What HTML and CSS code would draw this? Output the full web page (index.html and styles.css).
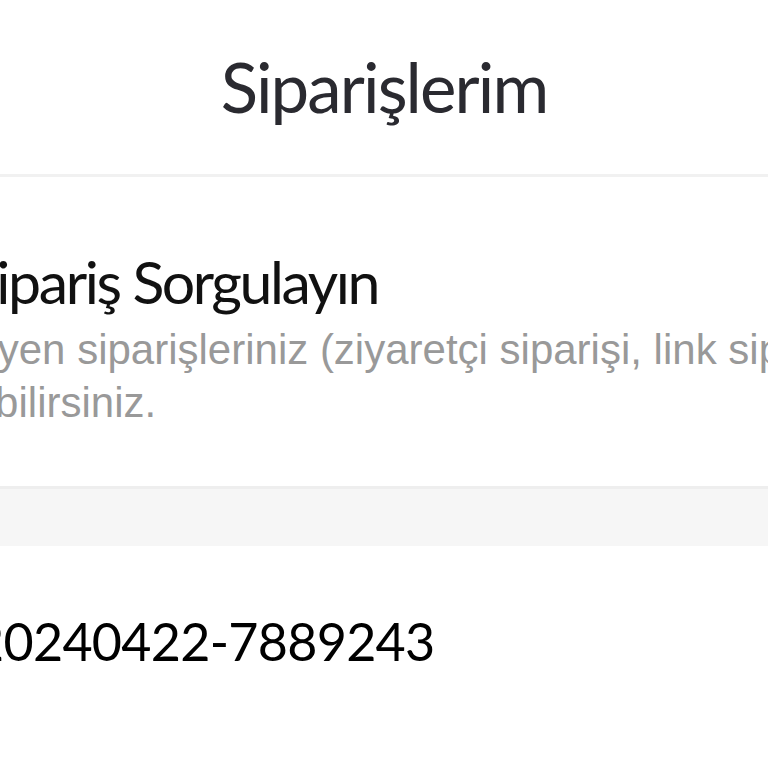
FILE: index.html
```html
<!DOCTYPE html>
<html lang="tr">
<head>
<meta charset="utf-8">
<title>Siparişlerim</title>
<link rel="stylesheet" href="styles.css">
</head>
<body>
<div class="page">
  <header class="topbar">
    <h1 class="title">Siparişlerim</h1>
  </header>
  <section class="query">
    <h2 class="query-title">Sipariş Sorgulayın</h2>
    <p class="query-desc">
      <span class="line line-1">görünmeyen siparişleriniz (ziyaretçi siparişi, link siparişi vb.)</span>
      <span class="line line-2">sorgulayabilirsiniz.</span>
    </p>
  </section>
  <div class="band"></div>
  <section class="order">
    <div class="order-no">20240422-7889243</div>
  </section>
</div>
</body>
</html>
```

FILE: styles.css
```css
html, body {
  margin: 0;
  padding: 0;
  background: #ffffff;
}

.page {
  width: 768px;
  height: 768px;
  overflow: hidden;
  background: #ffffff;
}

.topbar {
  height: 174px;
  border-bottom: 3px solid #f1f1f1;
  box-sizing: content-box;
  display: flex;
  justify-content: center;
}

.title {
  margin: 52px 0 0;
  font-family: Lato, "Noto Sans", sans-serif;
  font-weight: 400;
  font-size: 69px;
  letter-spacing: -1.9px;
  line-height: 1;
  color: #2a2a30;
}

.query {
  padding-top: 75px;
}

.query-title {
  margin: 0 0 0 -33px;
  font-family: Lato, "Noto Sans", sans-serif;
  font-weight: 400;
  font-size: 59px;
  letter-spacing: -2.4px;
  line-height: 1;
  color: #111111;
  white-space: nowrap;
}

.query-desc {
  margin: 12px 0 0;
  font-family: "Liberation Sans", Arial, sans-serif;
  font-size: 42px;
  line-height: 53px;
  color: #999999;
}

.line {
  display: block;
  white-space: nowrap;
}

.line-1 {
  margin-left: -168px;
}

.line-2 {
  margin-left: -187px;
}

.band {
  margin-top: 57px;
  height: 57px;
  border-top: 3px solid #eeeeee;
  background: #f6f6f6;
}

.order {
  padding-top: 69px;
}

.order-no {
  margin-left: -26px;
  font-family: Lato, "Noto Sans", sans-serif;
  font-size: 52px;
  letter-spacing: -0.7px;
  line-height: 1;
  color: #000000;
  white-space: nowrap;
}
```
